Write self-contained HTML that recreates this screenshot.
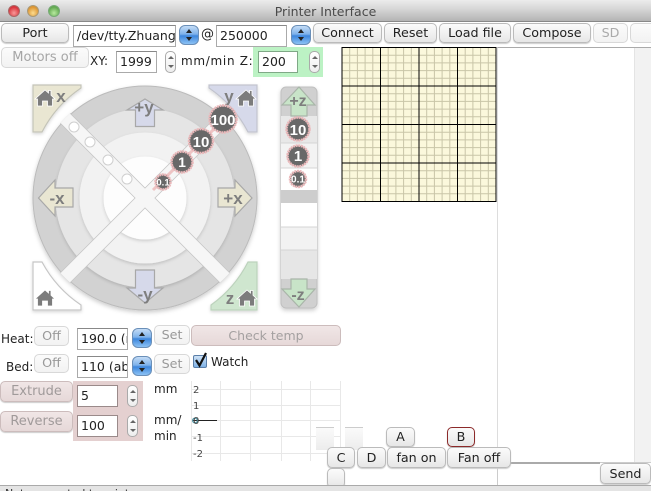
<!DOCTYPE html>
<html><head><meta charset="utf-8"><style>
html,body{margin:0;padding:0;background:#fff}
#p{position:relative;width:651px;height:491px;overflow:hidden;background:#fff;font-family:"DejaVu Sans","Liberation Sans",sans-serif;font-size:12px;color:#222;filter:blur(.3px)}
#p div,#p span.t{position:absolute;box-sizing:border-box;white-space:nowrap}
.b{background:linear-gradient(#fbfbfb,#f0f0f0 55%,#e6e6e6);border:1px solid #bbb;border-radius:5px;text-align:center;box-shadow:0 1px 1px #ccc;color:#222;font-size:12.7px}
.d{color:#aaa;border-color:#d8d8d8;box-shadow:none;background:linear-gradient(#fbfbfb,#f2f2f2)}
.pk{color:#a09a9a;border-color:#ccbcbc;background:linear-gradient(#f0e6e6,#e6d8d8);font-weight:normal}
.i{background:#fff;border:1px solid #aaa;border-top-color:#888;font-size:12.5px;padding-left:3px;overflow:hidden;color:#222}
.sb{width:20px;height:20px;border-radius:6px;border:1px solid #6a8fb8;background:linear-gradient(#c4dcf6,#7eb2ea 45%,#3d86dc 55%,#8cc2f4)}
.sb:before,.st:before{content:"";position:absolute;left:50%;margin-left:-3px;top:3px;border-left:3px solid transparent;border-right:3px solid transparent;border-bottom:4px solid #222}
.sb:after,.st:after{content:"";position:absolute;left:50%;margin-left:-3px;bottom:3px;border-left:3px solid transparent;border-right:3px solid transparent;border-top:4px solid #222}
.st{width:11px;height:22px;border-radius:5px;border:1px solid #aaa;background:linear-gradient(#fff,#eee)}
.st:before{border-bottom-color:#666;top:4px;border-bottom-width:3px}.st:after{border-top-color:#666;bottom:4px;border-top-width:3px}
.l{line-height:15px}
svg{position:absolute;left:0;top:0}
</style></head><body><div id="p">
<div style="left:0;top:0;width:651px;height:22px;background:linear-gradient(#ececec,#d8d8d8 40%,#b4b4b4);border-bottom:1px solid #888"></div>
<div style="left:8px;top:5px;width:12px;height:12px;border-radius:50%;background:radial-gradient(circle at 50% 70%,#f89a9a,#d8323a 70%);border:1px solid #a66"></div>
<div style="left:27px;top:5px;width:12px;height:12px;border-radius:50%;background:radial-gradient(circle at 50% 70%,#fcdc90,#dc9430 70%);border:1px solid #a97"></div>
<div style="left:48px;top:5px;width:12px;height:12px;border-radius:50%;background:radial-gradient(circle at 50% 70%,#b8eaa0,#62a850 70%);border:1px solid #7a7"></div>
<div style="left:0;top:4px;width:651px;text-align:center;font-size:12.5px;color:#4a4a4a;line-height:15px">Printer Interface</div>

<div class="b" style="left:1px;top:23px;width:68px;height:20px;line-height:18px">Port</div>
<div class="i" style="left:73px;top:25px;width:103px;height:22px;line-height:20px">/dev/tty.Zhuang</div>
<div class="sb" style="left:179px;top:25px"></div>
<div class="l" style="left:201px;top:27px;font-size:13px">@</div>
<div class="i" style="left:216px;top:25px;width:71px;height:22px;line-height:20px">250000</div>
<div class="sb" style="left:291px;top:25px"></div>
<div class="b" style="left:313px;top:23px;width:69px;height:20px;line-height:18px">Connect</div>
<div class="b" style="left:384px;top:23px;width:53px;height:20px;line-height:18px">Reset</div>
<div class="b" style="left:439px;top:23px;width:72px;height:20px;line-height:18px">Load file</div>
<div class="b" style="left:513px;top:23px;width:78px;height:20px;line-height:18px">Compose</div>
<div class="b d" style="left:593px;top:23px;width:35px;height:20px;line-height:18px">SD</div>
<div class="b d" style="left:630px;top:23px;width:30px;height:20px"></div>

<div class="b d" style="left:1px;top:47px;width:88px;height:21px;line-height:19px;color:#a6a6a6;font-size:13px">Motors off</div>
<div class="l" style="left:90px;top:54px">XY:</div>
<div class="i" style="left:116px;top:51px;width:41px;height:22px;line-height:20px">1999</div>
<div class="st" style="left:165px;top:51px"></div>
<div class="l" style="left:181px;top:54px;letter-spacing:.7px">mm/min Z:</div>
<div style="left:253px;top:47px;width:70px;height:30px;background:#bcf2c4"></div>
<div class="i" style="left:258px;top:51px;width:40px;height:22px;line-height:20px;border-color:#7fa886">200</div>
<div class="st" style="left:309px;top:51px"></div>

<!-- right column -->
<div style="left:497px;top:47px;width:154px;height:417px;border-top:1px solid #aaa;border-left:1px solid #ddd;background:#fff"></div>
<div style="left:634px;top:48px;width:17px;height:415px;background:#f2f2f2;border-left:1px solid #e4e4e4"></div>
<div style="left:497px;top:462px;width:103px;height:24px;border-top:2px solid #aaa;background:#fff;border-left:1px solid #ccc"></div>
<div style="left:600px;top:462px;width:51px;height:1px;background:#ccc"></div>
<div class="b" style="left:600px;top:463px;width:51px;height:21px;line-height:19px">Send</div>

<svg width="651" height="491" viewBox="0 0 651 491">
<defs>
<filter id="sh" x="-20%" y="-20%" width="140%" height="140%"><feDropShadow dx="0" dy="2" stdDeviation="2" flood-color="#000" flood-opacity=".2"/></filter>
<filter id="s2" x="-30%" y="-30%" width="160%" height="160%"><feDropShadow dx="0" dy="1.5" stdDeviation="1.5" flood-color="#000" flood-opacity=".16"/></filter>
<clipPath id="cc"><circle cx="145" cy="198" r="113"/></clipPath>
<path id="h" d="M-10,1 L0,-8 L3.5,-5 V-7.5 H6 V-2.8 L10,1 L7.5,1 V8 H2.5 V3 H-2.5 V8 H-7.5 V1 Z"/>
</defs>
<!-- grid -->
<rect x="342" y="47.5" width="154" height="154" fill="#fbf8dc"/>
<g stroke="#c9c5a8" stroke-width="1" fill="none">
<path d="M349.7,48V201M357.4,48V201M365.1,48V201M372.8,48V201M388.2,48V201M395.9,48V201M403.6,48V201M411.3,48V201M426.7,48V201M434.4,48V201M442.1,48V201M449.8,48V201M465.2,48V201M472.9,48V201M480.6,48V201M488.3,48V201"/>
<path d="M342,55.2H496M342,62.9H496M342,70.6H496M342,78.3H496M342,93.7H496M342,101.4H496M342,109.1H496M342,116.8H496M342,132.2H496M342,139.9H496M342,147.6H496M342,155.3H496M342,170.7H496M342,178.4H496M342,186.1H496M342,193.8H496"/>
</g>
<rect x="342" y="47.5" width="154" height="154" fill="none" stroke="#000" stroke-width="1"/>
<path d="M380.5,47.5V201.5M419,47.5V201.5M457.5,47.5V201.5M342,86H496M342,124.5H496M342,163H496" stroke="#000" stroke-width="1" fill="none"/>

<!-- joystick -->
<circle cx="145" cy="198" r="112" fill="#d2d2d2" stroke="#bbb" filter="url(#sh)"/>
<circle cx="145" cy="198" r="89.5" fill="#e5e5e5" filter="url(#s2)"/>
<circle cx="145" cy="198" r="65.5" fill="#f2f2f2" filter="url(#s2)"/>
<circle cx="145" cy="198" r="41.5" fill="#fdfdfd" filter="url(#s2)"/>
<g clip-path="url(#cc)">
<path d="M55,108L235,288M235,108L55,288" stroke="#c6c6c6" stroke-width="14.8"/>
<path d="M55,108L235,288M235,108L55,288" stroke="#f6f6f6" stroke-width="13.2"/>
</g>
<g fill="#fff" stroke="#cfcfcf"><circle cx="74" cy="127" r="5"/><circle cx="90" cy="142" r="5"/><circle cx="108" cy="160" r="5"/><circle cx="127" cy="179" r="5"/></g>
<g filter="url(#s2)" stroke-width="1.2">
<path d="M33,85H81V88A120,120 0 0 0 42,132H33Z" fill="#e9e6d2" stroke="#c4c4b8"/>
<path d="M257,85H209V88A120,120 0 0 1 248,132H257Z" fill="#d6d9ea" stroke="#c2c4ce"/>
<path d="M33,310H81V305A120,120 0 0 1 42,262H33Z" fill="#fff" stroke="#c6c6c6"/>
<path d="M257,310H211V305A120,120 0 0 0 248,262H257Z" fill="#cfe6cf" stroke="#bcd2bc"/>
</g>
<g fill="#7c7c7c" stroke="#fff" stroke-width=".8">
<use href="#h" x="45" y="98"/><use href="#h" x="246" y="98"/><use href="#h" x="45" y="298"/><use href="#h" x="247" y="298"/>
</g>
<g stroke="#a8a8a8" stroke-width="1.2">
<path d="M145,99L163,110H154.5V126.5H135.5V110H127Z" fill="#d6d9ea"/>
<path d="M145,303L163,288H154.5V270H135.5V288H127Z" fill="#d6d9ea"/>
<path d="M38.5,198L55,180V188H73V207H55V216Z" fill="#e9e6d2"/>
<path d="M252,198L235,180V188H218V207H235V216Z" fill="#e9e6d2"/>
</g>
<g font-family="'Liberation Sans',sans-serif" font-weight="bold" fill="#7e7e7e" font-size="17" text-anchor="middle">
<text x="144" y="113">+y</text><text x="145" y="300">-y</text><text x="57" y="204">-x</text><text x="233" y="204">+x</text>
<text x="61" y="102">x</text><text x="229" y="102">y</text><text x="230" y="304">z</text>
</g>
<path d="M153,190L232,111" stroke="#eec4c4" stroke-width="3"/>
<g fill="#686868" stroke="#eab8ba" stroke-width="2.5" stroke-dasharray="2 .6">
<circle cx="163" cy="182" r="7.5"/><circle cx="182" cy="162" r="10.5"/><circle cx="201" cy="141" r="12"/><circle cx="223" cy="119" r="13.5"/>
</g>
<g font-family="'Liberation Sans',sans-serif" font-weight="bold" fill="#fff" text-anchor="middle">
<text x="163" y="185.5" font-size="9.5">0.1</text><text x="182" y="167" font-size="14">1</text><text x="201" y="147" font-size="15">10</text><text x="223" y="125" font-size="15">100</text>
</g>

<!-- z bar -->
<rect x="281" y="87" width="36" height="221" rx="5" fill="#d0d0d0" stroke="#c0c0c0" filter="url(#sh)"/>
<rect x="281" y="116" width="36" height="27" fill="#e8e8e8"/>
<rect x="281" y="143" width="36" height="25" fill="#f3f3f3"/>
<rect x="281" y="168" width="36" height="22" fill="#fff"/>
<rect x="281" y="190" width="36" height="13" fill="#cdcdcd"/>
<rect x="281" y="203" width="36" height="24" fill="#fff"/>
<rect x="281" y="227" width="36" height="23" fill="#f2f2f2"/>
<rect x="281" y="250" width="36" height="29" fill="#e6e6e6"/>
<path d="M281,143H317M281,168H317M281,227H317M281,250H317" stroke="#d4d4d4" fill="none"/>
<g stroke="#a9b5a9" stroke-width="1.2" fill="#c8e4c8">
<path d="M299,87L315,105H307V116H291V105H282Z"/>
<path d="M299,307L315,289H307V279H291V289H282Z"/>
</g>
<g fill="#686868" stroke="#eab8ba" stroke-width="2.5" stroke-dasharray="2 .6">
<circle cx="298" cy="129" r="11.5"/><circle cx="298" cy="156" r="10.5"/><circle cx="298" cy="179" r="8"/>
</g>
<g font-family="'Liberation Sans',sans-serif" font-weight="bold" text-anchor="middle">
<text x="298" y="106" font-size="16" fill="#7e7e7e">+z</text><text x="298" y="300" font-size="16" fill="#7e7e7e">-z</text>
<text x="298" y="135" font-size="15" fill="#fff">10</text><text x="298" y="161" font-size="15" fill="#fff">1</text><text x="298" y="182.5" font-size="10" fill="#fff">0.1</text>
</g>

<!-- chart -->
<path d="M191.5,381V461M220.5,381V461M250.5,381V461M281.5,381V461M310.5,381V461M340.5,381V461M191,389.5H341M191,405.5H341M191,420.5H341M191,436.5H341M191,453.5H341" stroke="#e8e8e8" fill="none"/>
<path d="M193,420.5H217" stroke="#222" stroke-width="1"/>
<circle cx="195" cy="420.5" r="2.4" fill="none" stroke="#4a90a0" stroke-width="1.2"/>
<g font-family="'DejaVu Sans',sans-serif" font-size="10" fill="#444">
<text x="193" y="393">2</text><text x="193" y="409">1</text><text x="193" y="424">0</text><text x="193" y="441">-1</text><text x="193" y="457">-2</text>
</g>
</svg>

<div class="l" style="left:1px;top:332px">Heat:</div>
<div class="b d" style="left:34px;top:326px;width:35px;height:20px;line-height:17px;color:#999">Off</div>
<div class="i" style="left:77px;top:328px;width:51px;height:22px;line-height:20px">190.0 (r</div>
<div class="sb" style="left:132px;top:328px"></div>
<div class="b d" style="left:154px;top:325px;width:36px;height:20px;line-height:18px;color:#999">Set</div>
<div class="b pk" style="left:191px;top:325px;width:150px;height:21px;line-height:19px;box-shadow:none;color:#a4a0a0;font-size:12.5px">Check temp</div>

<div class="l" style="left:6px;top:360px">Bed:</div>
<div class="b d" style="left:34px;top:354px;width:35px;height:19px;line-height:16px;color:#999">Off</div>
<div class="i" style="left:77px;top:356px;width:51px;height:22px;line-height:20px">110 (ab</div>
<div class="sb" style="left:132px;top:356px"></div>
<div class="b d" style="left:154px;top:354px;width:36px;height:20px;line-height:18px;color:#999">Set</div>
<div style="left:193px;top:355px;width:14px;height:13px;border:1px solid #5a7ea8;border-radius:2px;background:linear-gradient(#cfe2f6,#7fb2e6)"></div>
<svg width="651" height="491"><path d="M196,360L199.5,365.5L206,353" fill="none" stroke="#111" stroke-width="2.2"/></svg>
<div class="l" style="left:211px;top:355px">Watch</div>

<div class="b pk" style="left:0;top:381px;width:73px;height:21px;line-height:19px;font-size:13px">Extrude</div>
<div class="b pk" style="left:0;top:411px;width:73px;height:21px;line-height:19px;font-size:13px">Reverse</div>
<div style="left:73px;top:381px;width:70px;height:60px;background:#e4d0d0"></div>
<div class="i" style="left:77px;top:385px;width:41px;height:22px;line-height:20px;border-color:#9a8a8a">5</div>
<div class="i" style="left:77px;top:415px;width:41px;height:22px;line-height:20px;border-color:#9a8a8a">100</div>
<div class="st" style="left:127px;top:385px"></div>
<div class="st" style="left:127px;top:415px"></div>
<div class="l" style="left:154px;top:382px">mm</div>
<div class="l" style="left:154px;top:413px">mm/</div>
<div class="l" style="left:154px;top:429px">min</div>

<div style="left:316px;top:427px;width:18px;height:23px;background:linear-gradient(#fafafa,#ececec);border-top:1px solid #ccc"></div>
<div style="left:345px;top:427px;width:18px;height:23px;background:linear-gradient(#fafafa,#ececec);border-top:1px solid #ccc"></div>
<div class="b" style="left:386px;top:427px;width:29px;height:20px;line-height:18px">A</div>
<div class="b" style="left:447px;top:427px;width:28px;height:20px;line-height:18px;border-color:#8c2a2a">B</div>
<div class="b" style="left:327px;top:447px;width:28px;height:21px;line-height:19px">C</div>
<div class="b" style="left:357px;top:447px;width:29px;height:21px;line-height:19px">D</div>
<div class="b" style="left:387px;top:447px;width:59px;height:21px;line-height:19px">fan on</div>
<div class="b" style="left:447px;top:447px;width:64px;height:21px;line-height:19px">Fan off</div>
<div class="b" style="left:327px;top:468px;width:18px;height:20px"></div>

<div style="left:0;top:485px;width:651px;height:6px;background:#e4e4e4;border-top:1px solid #aaa;overflow:hidden"><span class="t" style="left:5px;top:1px;font-size:11px;line-height:13px;color:#333">Not connected to printer.</span></div>
</div></body></html>
